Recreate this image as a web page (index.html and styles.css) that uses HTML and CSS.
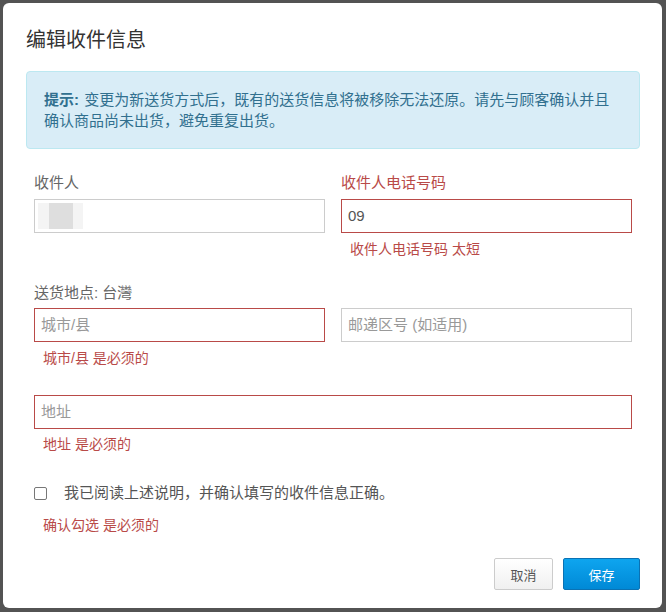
FILE: index.html
```html
<!DOCTYPE html>
<html lang="zh-CN">
<head>
<meta charset="utf-8">
<title>编辑收件信息</title>
<link rel="stylesheet" href="styles.css">
</head>
<body>
<div class="modal">
  <h2 class="modal-title">编辑收件信息</h2>
  <div class="alert"><b class="alert-strong">提示:</b> 变更为新送货方式后，既有的送货信息将被移除无法还原。请先与顾客确认并且确认商品尚未出货，避免重复出货。</div>
  <div class="form">
    <div class="row">
      <div class="field">
        <label class="label">收件人</label>
        <div class="input"><span class="blur"><span class="blur-core"></span></span></div>
      </div>
      <div class="field">
        <label class="label label-error">收件人电话号码</label>
        <div class="input input-error">09</div>
        <div class="error">收件人电话号码 太短</div>
      </div>
    </div>
    <div class="row row-2">
      <div class="field">
        <label class="label label-tight">送货地点: 台灣</label>
        <div class="input input-error placeholder">城市/县</div>
        <div class="error">城市/县 是必须的</div>
      </div>
      <div class="field field-end">
        <div class="input placeholder">邮递区号 (如适用)</div>
      </div>
    </div>
    <div class="address">
      <div class="input input-error placeholder">地址</div>
      <div class="error error-tight">地址 是必须的</div>
    </div>
    <div class="check-row">
      <span class="checkbox"></span>
      <span class="check-text">我已阅读上述说明，并确认填写的收件信息正确。</span>
    </div>
    <div class="error error-check">确认勾选 是必须的</div>
  </div>
  <div class="footer">
    <button class="btn btn-default">取消</button>
    <button class="btn btn-primary">保存</button>
  </div>
</div>
</body>
</html>
```

FILE: styles.css
```css
html, body {
  margin: 0;
  padding: 0;
}
body {
  width: 666px;
  height: 612px;
  background: #535353;
  font-family: "Liberation Sans", "Noto Sans CJK SC", sans-serif;
  font-size: 14px;
  color: #333;
  padding: 3px 4px 4px 3px;
  box-sizing: border-box;
  overflow: hidden;
}
.modal {
  width: 659px;
  height: 605px;
  background: #fff;
  border-radius: 6px;
  box-sizing: border-box;
  padding: 0 22px 0 23px;
  display: flex;
  flex-direction: column;
}
.modal-title {
  margin: 25px 0 0 0;
  font-size: 20px;
  line-height: 24px;
  font-weight: normal;
  color: #333;
}
.alert {
  margin-top: 19px;
  background: #d9edf7;
  border: 1px solid #bce8f1;
  border-radius: 4px;
  color: #31708f;
  padding: 17px 17px 17px 17px;
  line-height: 21px;
  font-size: 15px;
}
.alert-strong {
  font-weight: bold;
  margin-right: 1px;
}
.form {
  padding: 0 8px;
  margin-top: 24px;
}
.row {
  display: grid;
  grid-template-columns: 1fr 1fr;
  column-gap: 16px;
}
.row-2 {
  margin-top: 24px;
}
.field {
  display: flex;
  flex-direction: column;
}
.field-end {
  justify-content: flex-start;
  padding-top: 25px;
}
.label {
  line-height: 20px;
  font-size: 15px;
  color: #666;
  margin-bottom: 6px;
}
.label-tight {
  margin-bottom: 5px;
}
.label-error {
  color: #b94a48;
}
.input {
  height: 34px;
  box-sizing: border-box;
  border: 1px solid #ccc;
  padding: 0 6px;
  line-height: 32px;
  font-size: 15px;
  color: #555;
  display: flex;
  align-items: center;
}
.input-error {
  border-color: #b94a48;
}
.placeholder {
  color: #999;
}
.blur {
  display: flex;
  justify-content: center;
  width: 45px;
  height: 26px;
  margin-left: -3px;
  background: #f4f4f4;
}
.blur-core {
  width: 24px;
  height: 26px;
  background: #dedede;
}
.error {
  color: #b94a48;
  line-height: 20px;
  font-size: 14px;
  margin-top: 6px;
  padding-left: 9px;
}
.address {
  margin-top: 27px;
}
.error-tight {
  margin-top: 5px;
}
.check-row {
  margin-top: 29px;
  display: flex;
  align-items: center;
  line-height: 20px;
}
.checkbox {
  width: 11px;
  height: 11px;
  border: 1px solid #777;
  border-radius: 2px;
  margin: 0 17px 0 0;
}
.check-text {
  color: #555;
  font-size: 15px;
}
.error-check {
  margin-top: 12px;
}
.footer {
  margin-top: 23px;
  display: flex;
  justify-content: flex-end;
  gap: 10px;
}
.btn {
  height: 32px;
  box-sizing: border-box;
  font-family: "Liberation Sans", "Noto Sans CJK SC", sans-serif;
  font-size: 13px;
  border-radius: 2px;
  padding: 0;
  cursor: pointer;
}
.btn-default {
  width: 59px;
  color: #555;
  background: linear-gradient(#ffffff, #f0f0f0);
  border: 1px solid #ccc;
}
.btn-primary {
  width: 77px;
  color: #fff;
  background: linear-gradient(#0ea5ef, #0089d6);
  border: 1px solid #0a72b4;
}
```
